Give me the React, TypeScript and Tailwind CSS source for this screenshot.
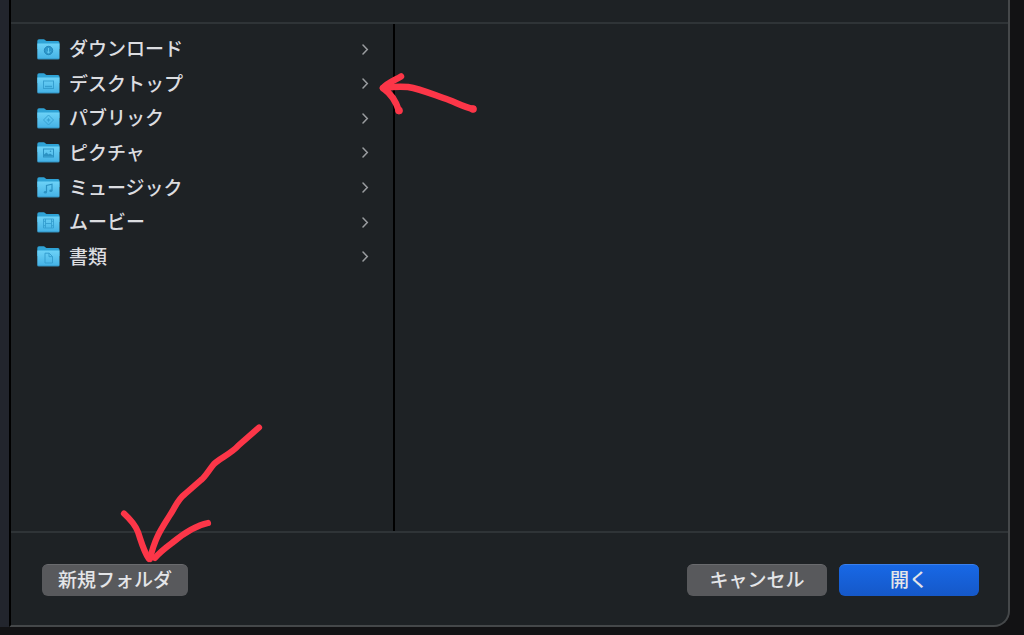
import type { ReactNode } from "react";

type Folder = { name: string; glyph: ReactNode };

const folders: Folder[] = [
  {
    name: "ダウンロード",
    glyph: (
      <>
        <circle cx="11.5" cy="11.5" r="4.2" fill="#2d97cb" stroke="#2587ba" />
        <path d="M11.5 9v5M9.7 12.3l1.8 1.8 1.8-1.8" stroke="#62c8f0" />
      </>
    ),
  },
  {
    name: "デスクトップ",
    glyph: (
      <>
        <rect x="6.5" y="8" width="10" height="7.500" stroke="#369fd0" />
        <path d="M8 13.500h7" stroke="#369fd0" strokeWidth="1.4" />
      </>
    ),
  },
  {
    name: "パブリック",
    glyph: (
      <>
        <path d="M11.5 7l5 5-5 5-5-5z" stroke="#38a2d3" />
        <path d="M11.5 9.8l.7 1.5 1.5.7-1.5.7-.7 1.5-.7-1.5-1.5-.7 1.5-.7z" fill="#38a2d3" />
      </>
    ),
  },
  {
    name: "ピクチャ",
    glyph: (
      <>
        <rect x="6.5" y="7" width="10" height="8" stroke="#2c92c3" />
        <path d="M7 14.500v-2l2.5-2 2 2 1.5-1 3 2v1z" fill="#2c92c3" />
        <circle cx="13.5" cy="9.3" r=".8" fill="#2c92c3" />
      </>
    ),
  },
  {
    name: "ミュージック",
    glyph: (
      <>
        <path d="M9.5 15V8.500l5.500-1.300v6.500" stroke="#2c92c3" strokeWidth="1.2" />
        <ellipse cx="8.4" cy="15.2" rx="1.6" ry="1.3" fill="#2c92c3" />
        <ellipse cx="13.9" cy="13.8" rx="1.6" ry="1.3" fill="#2c92c3" />
      </>
    ),
  },
  {
    name: "ムービー",
    glyph: (
      <path
        d="M6.5 7h10v9h-10zM8.5 7v9M14.5 7v9M8.5 11.500h6M6.5 9.300h2M6.5 13.700h2M14.5 9.300h2M14.5 13.700h2"
        stroke="#369fd0"
        strokeWidth=".9"
      />
    ),
  },
  {
    name: "書類",
    glyph: (
      <path d="M8 7.200h4.200l3.300 3.300v6.500H8zM12 7.200v3.500h3.500" stroke="#369fd0" />
    ),
  },
];

function FolderIcon({ children }: { children: ReactNode }) {
  return (
    <svg viewBox="0 0 23 21" className="h-[21px] w-[23px] shrink-0" fill="none" aria-hidden="true">
      <path
        d="M.3 2Q.3.3 2 .3h4.6q.9 0 1.5.6l.9.8q.5.4 1.3.4h10.6q1.6 0 1.6 1.6V10H.3z"
        fill="#2fa3d6"
      />
      <path d="M.3 4.500h22.2v14.300q0 1.5-1.5 1.5H1.8q-1.5 0-1.5-1.5z" fill="url(#folder-front)" />
      <path d="M.5 19.8h21.8" stroke="#3395c5" strokeWidth=".8" />
      {children}
    </svg>
  );
}

function Chevron() {
  return (
    <svg viewBox="0 0 7 11" className="h-[11px] w-[7px] shrink-0" fill="none" aria-hidden="true">
      <path d="M1 1l4.3 4.5L1 10" stroke="#9a9da0" strokeWidth="1.5" strokeLinecap="round" />
    </svg>
  );
}

const buttonBase =
  "h-8 rounded-md border-t text-[19px] leading-none font-medium text-[#e4e5e8] flex items-center justify-center pb-1";

export default function App() {
  return (
    <div className="flex min-h-screen bg-[#121214] font-['Noto_Sans_CJK_JP',sans-serif]">
      <svg className="absolute h-0 w-0" aria-hidden="true">
        <defs>
          <linearGradient id="folder-front" x1="0" y1="0" x2="0" y2="1">
            <stop offset="0" stopColor="#6dd2f7" />
            <stop offset="1" stopColor="#43b1e5" />
          </linearGradient>
        </defs>
      </svg>
      <div className="mb-2 w-[9px] shrink-0 bg-[#22252d]" />
      <main className="relative mr-3.5 mb-2 flex min-w-0 flex-1 flex-col overflow-hidden rounded-br-[16px] border-r-2 border-b-2 border-l-2 border-r-[#45484a] border-b-[#45484a] border-l-black bg-[#1e2225]">
        <header className="h-[22px] shrink-0" />
        <div className="flex flex-1 border-y-2 border-[#2f3437]">
          <nav className="w-[384px] shrink-0 border-r-2 border-black pt-2">
            <ul className="grid h-[242px] grid-rows-7">
              {folders.map(({ name, glyph }) => (
                <li key={name} className="flex">
                  <button
                    type="button"
                    className="flex w-full items-center gap-[9px] pr-6 pl-[26px] text-left text-[19px] leading-6 font-medium text-[#dcdde0]"
                  >
                    <FolderIcon>{glyph}</FolderIcon>
                    <span className="flex-1 pb-0.5">{name}</span>
                    <Chevron />
                  </button>
                </li>
              ))}
            </ul>
          </nav>
          <section className="flex-1" />
        </div>
        <footer className="flex shrink-0 items-center gap-3 pt-[31px] pr-[29px] pb-[29px] pl-[31px]">
          <button type="button" className={`${buttonBase} mr-auto w-[146px] border-[#6a6b6e] bg-[#58595c]`}>
            新規フォルダ
          </button>
          <button type="button" className={`${buttonBase} w-[140px] border-[#6a6b6e] bg-[#58595c]`}>
            キャンセル
          </button>
          <button
            type="button"
            className={`${buttonBase} w-[140px] border-[#3a80ee] bg-linear-to-b from-[#1868e6] to-[#1558c8]`}
          >
            開く
          </button>
        </footer>

        <svg
          viewBox="376 68 104 50"
          className="pointer-events-none absolute top-[68px] left-[365px] h-[50px] w-[104px]"
          fill="none"
          stroke="#fc3648"
          strokeWidth="6.5"
          strokeLinecap="round"
          strokeLinejoin="round"
          aria-hidden="true"
        >
          <path d="M473 109C464 107 457 103 449 100C434 95 421 89 408 87C398 86 390 87 383 88" />
          <path d="M401 76.5C395 80 387 83 383 88C390 93 396 101 399 111" />
          <circle cx="473" cy="109" r="3.8" fill="#fc3648" stroke="none" />
          <circle cx="399" cy="110.5" r="3.8" fill="#fc3648" stroke="none" />
        </svg>
        <svg
          viewBox="116 420 150 145"
          className="pointer-events-none absolute bottom-[60px] left-[105px] h-[145px] w-[150px]"
          fill="none"
          stroke="#fc3648"
          strokeWidth="6.2"
          strokeLinecap="round"
          strokeLinejoin="round"
          aria-hidden="true"
        >
          <path d="M259 427.5L239 445C231 454 220 458 214 464C208 471 206 476 201 480L185 494C177 500 175 508 170 515C162 528 155 537 150 559" />
          <path d="M124 513.5C130 519 135 524 138 532C142 544 144 552 149 559" />
          <path d="M208 523C193 526 178 538 172 543C164 549 158 554 155 558" />
        </svg>
      </main>
    </div>
  );
}
